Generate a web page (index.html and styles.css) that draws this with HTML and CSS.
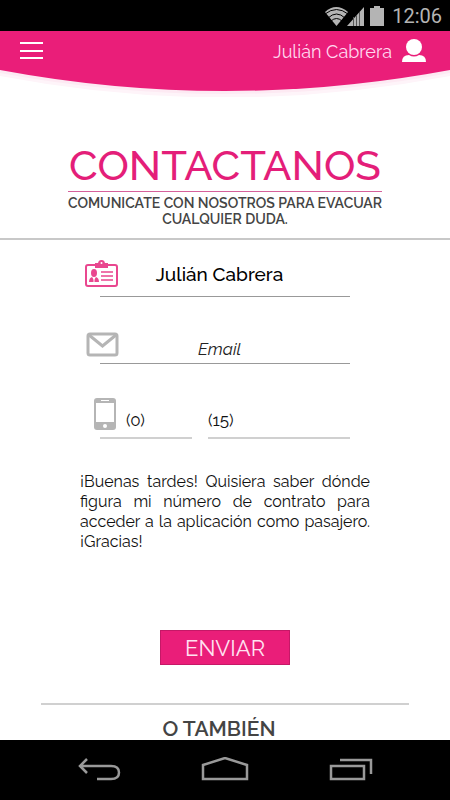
FILE: index.html
```
<!DOCTYPE html>
<html lang="es">

<head>
    <meta charset="UTF-8">
    <meta name="viewport" content="width=device-width, initial-scale=1.0">
    <title>Contactanos</title>
    <link rel="stylesheet" href="styles.css">
</head>

<body>
    <div class="status">
        <svg width="60" height="22" viewBox="0 0 60 22" fill="#b4b4b4" aria-hidden="true">
            <path d="M1 7Q12 -3 24 7L12.500 21Z" />
            <path d="M1 9Q12.500 0 24 9M4 13Q12.500 5 21 13M7 16Q12.500 11 18 16" fill="none" stroke="#000" />
            <path d="M23 21L40 2V21Z" />
            <path d="M29.500 12V21M32.500 10V21M35.500 7V21" stroke="#555" />
            <path d="M46 3H50V1H56V3H60V21H46Z" />
        </svg>
        <span>12:06</span>
    </div>

    <header class="header">
        <svg class="curve" viewBox="0 0 450 66" preserveAspectRatio="none" aria-hidden="true">
            <path d="M0 0H450V45Q225 88 0 45Z" fill="#fef4f9" />
            <path d="M0 0H450V42Q225 84 0 42Z" fill="#fdeaf3" />
            <path d="M0 0H450V39Q225 81 0 39Z" fill="#ea1e79" />
        </svg>
        <button class="menu" type="button" aria-label="Menú">
            <svg width="24" height="18" viewBox="0 0 24 18" stroke="#fff" stroke-width="2">
                <path d="M0 1H23M0 9H23M0 16H23" />
            </svg>
        </button>
        <a class="user" href="#">
            <span>Julián Cabrera</span>
            <svg width="24" height="24" viewBox="0 0 24 24" fill="#fff" aria-hidden="true">
                <ellipse cx="12" cy="8" rx="8" ry="8" />
                <path d="M0 23Q0 16 7 16Q12 19 17 16Q24 16 24 23Z" />
            </svg>
        </a>
    </header>

    <main>
        <div class="intro">
            <h1>CONTACTANOS</h1>
            <p>COMUNICATE CON NOSOTROS PARA EVACUAR CUALQUIER DUDA.</p>
        </div>

        <form class="form">
            <div class="field">
                <label for="nombre" aria-label="Nombre">
                    <svg width="34" height="28" viewBox="0 0 34 28" fill="none" stroke="#e9478f" stroke-width="2">
                        <rect x="1" y="5" width="31" height="21" rx="2" />
                        <path d="M11 4H14Q14 1 16.500 1T19 4H22V7H11Z" fill="#e9478f" />
                        <circle cx="16.500" cy="3" r="1" fill="#fff" stroke="none" />
                        <path d="M16 12H28M16 16H28M16 20H28" stroke-width="1.500" />
                        <ellipse cx="9" cy="13" rx="3" ry="4" fill="#e9478f" stroke="none" />
                        <path d="M4 22Q4 18 7 17L9 20L11 17Q14 18 14 22Z" fill="#e9478f" stroke="none" />
                        <path d="M9 18V22" stroke="#fff" stroke-width="1" />
                    </svg>
                </label>
                <input class="name" id="nombre" type="text" value="Julián Cabrera">
            </div>
            <div class="field">
                <label for="email" aria-label="Email">
                    <svg width="34" height="26" viewBox="0 0 34 26" fill="none" stroke="#b5b5b5" stroke-width="3">
                        <rect x="3" y="3" width="29" height="21" rx="2" />
                        <path d="M4 4L17.500 15L31 4" />
                    </svg>
                </label>
                <input class="email" id="email" type="email" placeholder="Email">
            </div>
            <div class="phone">
                <div class="field">
                    <label for="area" aria-label="Código de área">
                        <svg width="22" height="32" viewBox="0 0 22 32" aria-hidden="true">
                            <rect width="22" height="32" rx="3" fill="#b5b5b5" />
                            <path d="M2 5H20V24H2Z" fill="#fff" />
                            <path d="M7 2.500H15" stroke="#fff" />
                            <circle cx="11" cy="28" r="2" fill="#fff" />
                        </svg>
                    </label>
                    <input id="area" type="tel" value="(0)">
                </div>
                <div class="field">
                    <input id="numero" type="tel" value="(15)" aria-label="Número">
                </div>
            </div>
            <textarea rows="4" aria-label="Mensaje">¡Buenas tardes! Quisiera saber dónde figura mi número de contrato para acceder a la aplicación como pasajero. ¡Gracias!</textarea>
            <button class="send" type="submit">ENVIAR</button>
        </form>

        <h2>O TAMBIÉN</h2>
    </main>

    <nav class="navbar">
        <button type="button" aria-label="Atrás">
            <svg width="44" height="26" viewBox="0 0 44 26">
                <path d="M10 2L3 9L10 16M3 9H34Q42 9 42 15.500T34 22H20" />
            </svg>
        </button>
        <button type="button" aria-label="Inicio">
            <svg width="48" height="26" viewBox="0 0 48 26">
                <path d="M2 22V8L24 1L46 8V22Z" />
            </svg>
        </button>
        <button type="button" aria-label="Recientes">
            <svg width="44" height="26" viewBox="0 0 44 26">
                <path d="M2 9H35V22H2ZM11 3H42V17" />
            </svg>
        </button>
    </nav>
</body>

</html>
```
FILE: styles.css
```
* {
    box-sizing: border-box;
}

body {
    display: flex;
    flex-direction: column;
    min-height: 100vh;
    margin: 0;
    background-color: #fff;
    color: #111;
    font-family: Raleway, Lato, sans-serif;
}

button {
    padding: 0;
    border: none;
    background: none;
    font-family: inherit;
    cursor: pointer;
}

svg {
    display: block;
}

.status {
    display: flex;
    justify-content: flex-end;
    align-items: center;
    gap: 8px;
    height: 31px;
    padding-right: 8px;
    background-color: #000;
    color: #b4b4b4;
    font-family: Roboto, sans-serif;
    font-size: 20px;
}

.header {
    position: relative;
    display: flex;
    justify-content: space-between;
    align-items: center;
    height: 66px;
    padding: 0 24px 26px 20px;
}

.curve {
    position: absolute;
    top: 0;
    left: 0;
    width: 100%;
    height: 100%;
}

.menu {
    position: relative;
}

.user {
    position: relative;
    display: flex;
    align-items: center;
    gap: 10px;
    color: #ffd9f0;
    font-size: 18px;
    text-decoration: none;
}

main {
    flex: 1;
}

.intro {
    padding: 44px 60px 11px;
    border-bottom: 2px solid #c8c8c8;
    text-align: center;
}

h1 {
    width: 314px;
    max-width: 100%;
    margin: 0 auto;
    border-bottom: 1px solid #d6619b;
    color: #e41e79;
    font-size: 42px;
    font-weight: 500;
    line-height: 50px;
}

.intro p {
    max-width: 320px;
    margin: 3px auto 0;
    color: #444;
    font-size: 14px;
    font-weight: 600;
    line-height: 16px;
}

.form {
    display: flex;
    flex-direction: column;
    max-width: 290px;
    margin: 0 auto;
}

.field {
    display: flex;
    align-items: center;
    height: 57px;
    margin: 0 20px;
    padding-top: 12px;
    border-bottom: 1px solid #999;
}

.field label {
    flex: none;
    margin-left: -15px;
}

.field + .field {
    height: 67px;
    padding-top: 28px;
}

input {
    flex: 1;
    min-width: 0;
    padding: 0;
    border: none;
    outline: none;
    background: none;
    color: #111;
    font-family: inherit;
    font-size: 17px;
}

.name,
.email {
    padding-right: 30px;
    text-align: center;
}

.name {
    color: #000;
    font-size: 19px;
    font-weight: 500;
}

.email {
    padding-top: 10px;
}

.email::placeholder {
    color: #222;
    font-style: italic;
    opacity: 1;
}

.phone {
    display: grid;
    grid-template-columns: 92px minmax(0, 1fr);
    gap: 16px;
    margin: 32px 20px 0;
}

.phone .field {
    height: 43px;
    margin: 0;
    padding: 0 0 6px;
    border-bottom: 2px solid #d0d0d0;
}

.phone label {
    margin: 0 10px 0 -6px;
}

.phone input {
    padding-top: 12px;
}

textarea {
    width: 100%;
    margin-top: 33px;
    padding: 0;
    border: none;
    outline: none;
    background: none;
    color: #111;
    font-family: inherit;
    font-size: 16px;
    line-height: 20px;
    text-align: justify;
    resize: none;
    overflow: hidden;
}

.send {
    align-self: center;
    width: 130px;
    height: 35px;
    margin-top: 78px;
    border: 1px solid #c51867;
    background-color: #ea1e79;
    color: #ffe3f1;
    font-size: 22px;
}

h2 {
    margin: 38px 41px 0;
    padding: 12px 12px 0 0;
    border-top: 2px solid #d0d0d0;
    color: #444;
    font-size: 21px;
    font-weight: 600;
    line-height: 23px;
    text-align: center;
}

.navbar {
    display: flex;
    justify-content: space-between;
    align-items: center;
    height: 60px;
    padding: 0 77px;
    background-color: #000;
}

.navbar path {
    fill: none;
    stroke: #999;
    stroke-width: 2.500;
}
```
